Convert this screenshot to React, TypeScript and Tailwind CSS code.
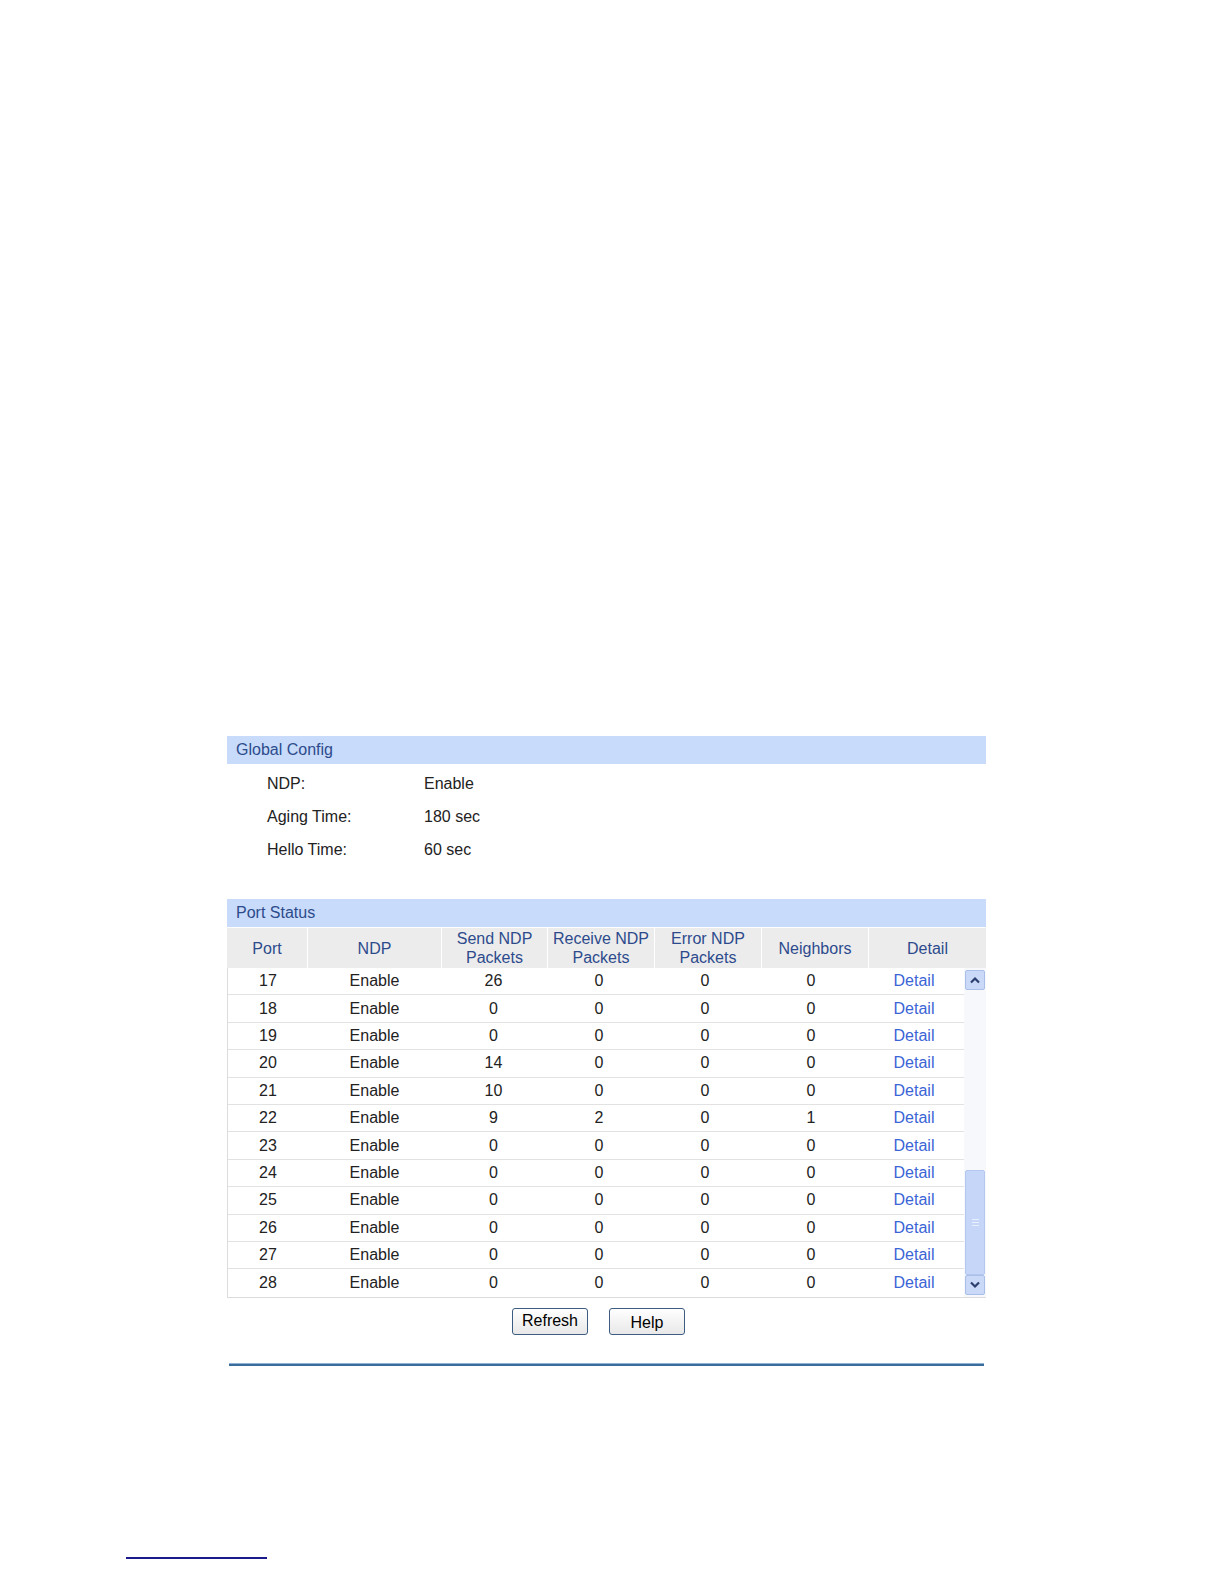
import React from "react";

const ROWS = [
  { port: 17, send: 26, recv: 0, err: 0, nb: 0 },
  { port: 18, send: 0, recv: 0, err: 0, nb: 0 },
  { port: 19, send: 0, recv: 0, err: 0, nb: 0 },
  { port: 20, send: 14, recv: 0, err: 0, nb: 0 },
  { port: 21, send: 10, recv: 0, err: 0, nb: 0 },
  { port: 22, send: 9, recv: 2, err: 0, nb: 1 },
  { port: 23, send: 0, recv: 0, err: 0, nb: 0 },
  { port: 24, send: 0, recv: 0, err: 0, nb: 0 },
  { port: 25, send: 0, recv: 0, err: 0, nb: 0 },
  { port: 26, send: 0, recv: 0, err: 0, nb: 0 },
  { port: 27, send: 0, recv: 0, err: 0, nb: 0 },
  { port: 28, send: 0, recv: 0, err: 0, nb: 0 },
];

const COLS = ["w-[80px]", "w-[133px]", "w-[105px]", "w-[106px]", "w-[106px]", "w-[106px]"];

function SectionTitle({ children }: { children: React.ReactNode }) {
  return (
    <div className="h-[28px] bg-[#c8dbfa] pl-[9px] flex items-center text-[16px] text-[#2d4b8c]">
      {children}
    </div>
  );
}

function Arrow({ up }: { up?: boolean }) {
  return (
    <div className="h-[20px] w-[20px] mx-auto rounded-[2px] border border-[#a9bfe8] bg-[#c9d9f7] flex items-center justify-center">
      <svg width="12" height="8" viewBox="0 0 12 8">
        <path
          d={up ? "M2 6.5 L6 2.5 L10 6.5" : "M2 1.5 L6 5.5 L10 1.5"}
          fill="none"
          stroke="#2c3f6e"
          strokeWidth="2.2"
        />
      </svg>
    </div>
  );
}

export default function App() {
  return (
    <div
      className="min-h-[1584px] bg-white pt-[736px] text-[#222]"
      style={{ fontFamily: '"Liberation Sans", Arial, sans-serif' }}
    >
      <div className="ml-[227px] w-[759px]">
        <SectionTitle>Global Config</SectionTitle>
        <div className="pl-[40px] pt-[9px] pb-[38px] text-[16px] flex flex-col gap-[11px]">
          {[
            ["NDP:", "Enable"],
            ["Aging Time:", "180 sec"],
            ["Hello Time:", "60 sec"],
          ].map(([k, v]) => (
            <div key={k} className="flex h-[22px] items-center">
              <span className="w-[157px]">{k}</span>
              <span>{v}</span>
            </div>
          ))}
        </div>

        <SectionTitle>Port Status</SectionTitle>
        <div className="flex h-[41px] text-[16px] text-[#2d4b8c] leading-[19px] bg-white gap-[1px] pt-[1px]">
          {["Port", "NDP", "Send NDP\nPackets", "Receive NDP\nPackets", "Error NDP\nPackets", "Neighbors"].map(
            (h, i) => (
              <div
                key={h}
                className={`${COLS[i]} bg-[#ececec] flex items-center justify-center text-center whitespace-pre-line`}
              >
                {h}
              </div>
            )
          )}
          <div className="flex-1 bg-[#ececec] flex items-center justify-center">Detail</div>
        </div>

        <div className="flex border-l border-b border-[#dcdcdc]">
          <div className="flex-1">
            {ROWS.map((r) => (
              <div key={r.port} className="flex h-[27.4px] items-center text-[16px] border-b border-[#e2e2e2] last:border-b-0">
                <div className={`${COLS[0]} text-center`}>{r.port}</div>
                <div className={`${COLS[1]} text-center`}>Enable</div>
                <div className={`${COLS[2]} text-center`}>{r.send}</div>
                <div className={`${COLS[3]} text-center`}>{r.recv}</div>
                <div className={`${COLS[4]} text-center`}>{r.err}</div>
                <div className={`${COLS[5]} text-center`}>{r.nb}</div>
                <div className="flex-1 text-center text-[#3b64d6]">Detail</div>
              </div>
            ))}
          </div>
          <div className="w-[22px] bg-[#f7f8fb] flex flex-col pt-[2px] pb-[2px]">
            <Arrow up />
            <div className="flex-1 flex flex-col">
              <div className="h-[180px]" />
              <div className="flex-1 mx-[1px] rounded-[2px] border border-[#b4c8ef] bg-[#c5d6f8] flex items-center justify-center">
                <div className="flex flex-col gap-[2px]">
                  <div className="h-[1px] w-[7px] bg-[#e8efff]" />
                  <div className="h-[1px] w-[7px] bg-[#e8efff]" />
                  <div className="h-[1px] w-[7px] bg-[#e8efff]" />
                </div>
              </div>
            </div>
            <Arrow />
          </div>
        </div>

        <div className="flex justify-center gap-[21px] pt-[10px] pr-[16px]">
          <button className="w-[76px] h-[27px] rounded-[3px] border border-[#3d5c82] bg-gradient-to-b from-white to-[#e8e8e8] text-[16px] text-black">
            Refresh
          </button>
          <button className="w-[76px] h-[27px] rounded-[3px] border border-[#3d5c82] bg-gradient-to-b from-white to-[#e8e8e8] text-[16px] text-black pt-[2px]">
            Help
          </button>
        </div>

        <div className="mt-[28px] ml-[2px] w-[755px] h-[3px] bg-[#3c6c9c] border-t border-[#8fb3d6]" />
      </div>

      <div className="ml-[126px] mt-[191px] w-[141px] h-[2px] bg-[#1a1a8c]" />
    </div>
  );
}
